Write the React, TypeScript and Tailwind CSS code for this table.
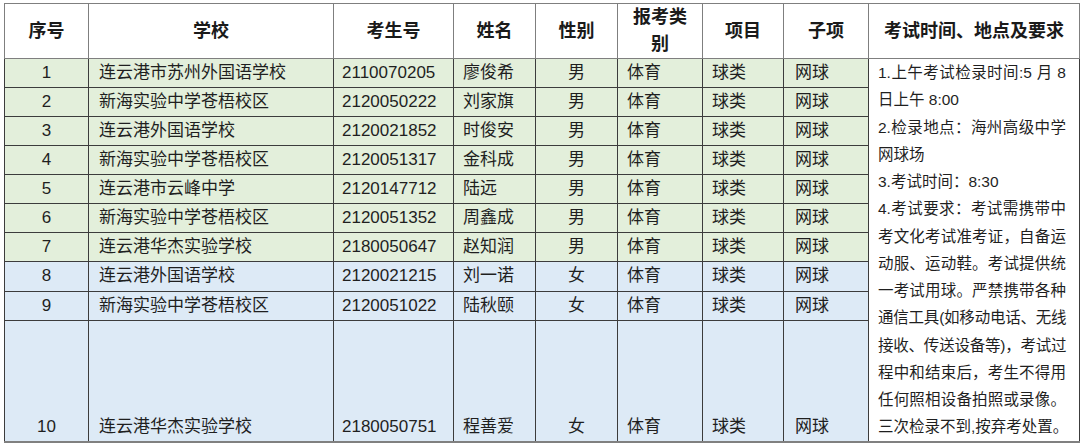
import React from "react";

const rows: [string, string, string, string, string][] = [
  ["1", "连云港市苏州外国语学校", "2110070205", "廖俊希", "男"],
  ["2", "新海实验中学苍梧校区", "2120050222", "刘家旗", "男"],
  ["3", "连云港外国语学校", "2120021852", "时俊安", "男"],
  ["4", "新海实验中学苍梧校区", "2120051317", "金科成", "男"],
  ["5", "连云港市云峰中学", "2120147712", "陆远", "男"],
  ["6", "新海实验中学苍梧校区", "2120051352", "周鑫成", "男"],
  ["7", "连云港华杰实验学校", "2180050647", "赵知润", "男"],
  ["8", "连云港外国语学校", "2120021215", "刘一诺", "女"],
  ["9", "新海实验中学苍梧校区", "2120051022", "陆秋颐", "女"],
  ["10", "连云港华杰实验学校", "2180050751", "程善爱", "女"],
];

const noteLines: { t: string; j: boolean; tight?: boolean }[] = [
  { t: "1.上午考试检录时间:5 月 8", j: true },
  { t: "日上午 8:00", j: false },
  { t: "2.检录地点：海州高级中学", j: true },
  { t: "网球场", j: false },
  { t: "3.考试时间：8:30", j: false },
  { t: "4.考试要求：考试需携带中", j: true },
  { t: "考文化考试准考证，自备运", j: true },
  { t: "动服、运动鞋。考试提供统", j: true },
  { t: "一考试用球。严禁携带各种", j: true },
  { t: "通信工具(如移动电话、无线", j: true, tight: true },
  { t: "接收、传送设备等)，考试过", j: true, tight: true },
  { t: "程中和结束后，考生不得用", j: true },
  { t: "任何照相设备拍照或录像。", j: true },
  { t: "三次检录不到,按弃考处置。", j: true },
];

export default function App() {
  const font = {
    fontFamily: '"Liberation Sans", "Noto Sans CJK SC", sans-serif',
  };
  const th =
    "border border-[#7f7f7f] bg-white text-[18px] font-bold text-[#1a1a1a] text-center align-middle leading-[27px]";
  const td = "border border-[#3c3c3c] text-[17px] text-[#1f1f1f] whitespace-nowrap";
  return (
    <div className="w-[1080px] h-[443px] bg-white pt-[3px] pl-[4px]" style={font}>
      <table className="border-collapse table-fixed w-[1075px]">
        <colgroup>
          <col className="w-[84px]" />
          <col className="w-[245px]" />
          <col className="w-[120px]" />
          <col className="w-[82px]" />
          <col className="w-[82px]" />
          <col className="w-[85px]" />
          <col className="w-[81px]" />
          <col className="w-[85px]" />
          <col className="w-[211px]" />
        </colgroup>
        <thead>
          <tr className="h-[55px]">
            <th className={th}>序号</th>
            <th className={th}>学校</th>
            <th className={th}>考生号</th>
            <th className={th}>姓名</th>
            <th className={th}>性别</th>
            <th className={th}>
              报考类
              <br />
              别
            </th>
            <th className={th}>项目</th>
            <th className={th}>子项</th>
            <th className={th}>考试时间、地点及要求</th>
          </tr>
        </thead>
        <tbody>
          {rows.map((r, i) => {
            const last = i === rows.length - 1;
            const bg = i < 7 ? "bg-[#e3efdb]" : "bg-[#ddeaf6]";
            const va = last ? "align-bottom pb-[2px] leading-[24px]" : "align-middle leading-[24px]";
            const bb = last ? "border-b-2 border-b-[#808080]" : "";
            return (
              <tr key={i} className={last ? "h-[121px]" : "h-[29px]"}>
                <td className={`${td} ${bg} ${va} text-center ${bb}`}>{r[0]}</td>
                <td className={`${td} ${bg} ${va} pl-[10px] ${bb}`}>{r[1]}</td>
                <td className={`${td} ${bg} ${va} pl-[8px] ${bb}`}>{r[2]}</td>
                <td className={`${td} ${bg} ${va} pl-[9px] ${bb}`}>{r[3]}</td>
                <td className={`${td} ${bg} ${va} text-center ${bb}`}>{r[4]}</td>
                <td className={`${td} ${bg} ${va} pl-[9px] ${bb}`}>体育</td>
                <td className={`${td} ${bg} ${va} pl-[9px] ${bb}`}>球类</td>
                <td className={`${td} ${bg} ${va} pl-[11px] ${bb}`}>网球</td>
                {i === 0 && (
                  <td
                    rowSpan={10}
                    className="border border-[#3c3c3c] border-b-2 border-b-[#808080] bg-white align-top pl-[9px] pr-[13px] text-[15.5px] text-[#1f1f1f]"
                  >
                    <div className="flex flex-col">
                      {noteLines.map((l, k) => (
                        <div
                          key={k}
                          className={`h-[27.25px] leading-[27.25px] whitespace-nowrap ${
                            l.j ? "text-justify [text-align-last:justify]" : "text-left"
                          } ${l.tight ? "tracking-[-0.6px]" : ""}`}
                        >
                          {l.t}
                        </div>
                      ))}
                    </div>
                  </td>
                )}
              </tr>
            );
          })}
        </tbody>
      </table>
    </div>
  );
}
